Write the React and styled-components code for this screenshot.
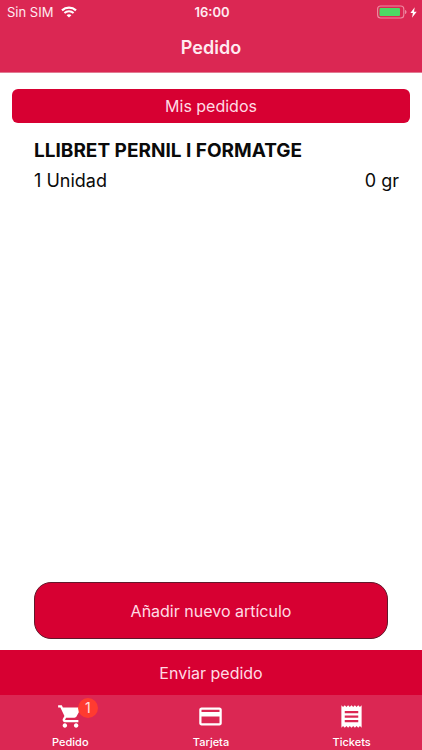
import React from "react";
import styled, { createGlobalStyle } from "styled-components";
import { MdShoppingCart, MdCreditCard, MdReceipt } from "react-icons/md";

const GlobalStyle = createGlobalStyle`
  *, *::before, *::after { box-sizing: border-box; }
  body {
    margin: 0;
    background: #ffffff;
    color: #0a0a0a;
    font-family: Inter, Roboto, sans-serif;
  }
  button, h1, h2, h3, p, ul { margin: 0; padding: 0; font: inherit; }
  ul { list-style: none; }
`;

const Screen = styled.div`
  display: flex;
  flex-direction: column;
  min-height: 100vh;
`;

const Header = styled.header`
  background: #db2753;
  border-bottom: 1px solid #e27a92;
  color: #ffeaf0;
`;

const StatusBar = styled.div`
  display: grid;
  grid-template-columns: 1fr auto 1fr;
  align-items: center;
  height: 24px;
  padding: 0 5px 0 7px;
  font-size: 13px;
`;

const Carrier = styled.span`
  display: flex;
  align-items: center;
  gap: 8px;
`;

const Clock = styled.span`
  font-weight: 600;
`;

const Power = styled.span`
  display: flex;
  align-items: center;
  justify-content: flex-end;
  gap: 3px;
`;

const Title = styled.h1`
  height: 48px;
  line-height: 48px;
  font-size: 18px;
  font-weight: 600;
  text-align: center;
`;

const Main = styled.main`
  flex: 1;
  display: flex;
  flex-direction: column;
  padding-top: 16px;
`;

const Banner = styled.h2`
  margin: 0 12px;
  border-radius: 6px;
  background: #d70032;
  color: #ffdbe4;
  font-size: 16px;
  font-weight: 400;
  line-height: 34px;
  text-align: center;
`;

const Orders = styled.ul`
  flex: 1;
  padding: 13px 23px 0 34px;
`;

const OrderName = styled.h3`
  font-size: 19px;
  font-weight: 700;
  line-height: 30px;
`;

const OrderDetail = styled.p`
  display: flex;
  justify-content: space-between;
  font-size: 18px;
  line-height: 30px;
`;

const AddButton = styled.button`
  height: 57px;
  margin: 0 34px 11px;
  border: 1px solid #60182a;
  border-radius: 17px;
  background: #d70032;
  color: #ffdbe4;
  font-size: 16px;
  cursor: pointer;
`;

const SendButton = styled.button`
  height: 45px;
  border: 0;
  background: #d70032;
  color: #ffdbe4;
  font-size: 16px;
  cursor: pointer;
`;

const TabBar = styled.nav`
  display: grid;
  grid-template-columns: repeat(3, 1fr);
  height: 55px;
  background: #db2753;
`;

const Tab = styled.button`
  display: flex;
  flex-direction: column;
  align-items: center;
  padding-top: 8px;
  border: 0;
  background: none;
  color: #ffffff;
  cursor: pointer;
`;

const TabIcon = styled.span`
  position: relative;
  display: flex;
  font-size: 27px;
`;

const Badge = styled.span`
  position: absolute;
  top: -5px;
  left: 21px;
  width: 20px;
  height: 20px;
  border-radius: 50%;
  background: #ff3b30;
  color: #ffe1e1;
  font-size: 14px;
  line-height: 20px;
  text-align: center;
`;

const TabLabel = styled.span`
  margin-top: 4px;
  font-size: 11px;
  font-weight: 500;
  line-height: 16px;
`;

const WifiIcon = () => (
  <svg width="16" height="12" viewBox="0 0 16 12" fill="none" aria-hidden="true">
    <path d="M1 4.4C5 .7 11 .7 15 4.4" stroke="#fff" strokeWidth="2.2" />
    <path d="M3.4 7C6 4.6 10 4.6 12.6 7" stroke="#fff" strokeWidth="2" />
    <path d="M8 11.6 5.6 9.2C6.9 8 9.1 8 10.4 9.2Z" fill="#fff" />
  </svg>
);

const BatteryIcon = () => (
  <svg width="30" height="14" viewBox="0 0 30 14" fill="none" aria-hidden="true">
    <rect x=".6" y="1" width="26.2" height="12" rx="3" stroke="#ee8ba3" strokeWidth="1.1" />
    <rect x="2.5" y="3" width="20.5" height="8" rx="1" fill="#4cd964" />
    <path d="M28 5c2 .6 2 3.4 0 4Z" fill="#ee8ba3" />
  </svg>
);

const BoltIcon = () => (
  <svg width="7" height="11" viewBox="0 0 7 11" aria-hidden="true">
    <path d="M4.7.3.4 6h2.5L2 10.7 6.7 4.7H4Z" fill="#fff" />
  </svg>
);

const orders = [{ name: "LLIBRET PERNIL I FORMATGE", units: "1 Unidad", weight: "0 gr" }];

const tabs = [
  { label: "Pedido", Icon: MdShoppingCart, count: 1 },
  { label: "Tarjeta", Icon: MdCreditCard },
  { label: "Tickets", Icon: MdReceipt },
];

export default function App() {
  return (
    <Screen>
      <GlobalStyle />
      <Header>
        <StatusBar>
          <Carrier>
            Sin SIM
            <WifiIcon />
          </Carrier>
          <Clock>16:00</Clock>
          <Power>
            <BatteryIcon />
            <BoltIcon />
          </Power>
        </StatusBar>
        <Title>Pedido</Title>
      </Header>
      <Main>
        <Banner>Mis pedidos</Banner>
        <Orders>
          {orders.map((order) => (
            <li key={order.name}>
              <OrderName>{order.name}</OrderName>
              <OrderDetail>
                <span>{order.units}</span>
                <span>{order.weight}</span>
              </OrderDetail>
            </li>
          ))}
        </Orders>
        <AddButton type="button">Añadir nuevo artículo</AddButton>
      </Main>
      <SendButton type="button">Enviar pedido</SendButton>
      <TabBar>
        {tabs.map(({ label, Icon, count }) => (
          <Tab key={label} type="button">
            <TabIcon>
              <Icon aria-hidden="true" />
              {count && <Badge>{count}</Badge>}
            </TabIcon>
            <TabLabel>{label}</TabLabel>
          </Tab>
        ))}
      </TabBar>
    </Screen>
  );
}
